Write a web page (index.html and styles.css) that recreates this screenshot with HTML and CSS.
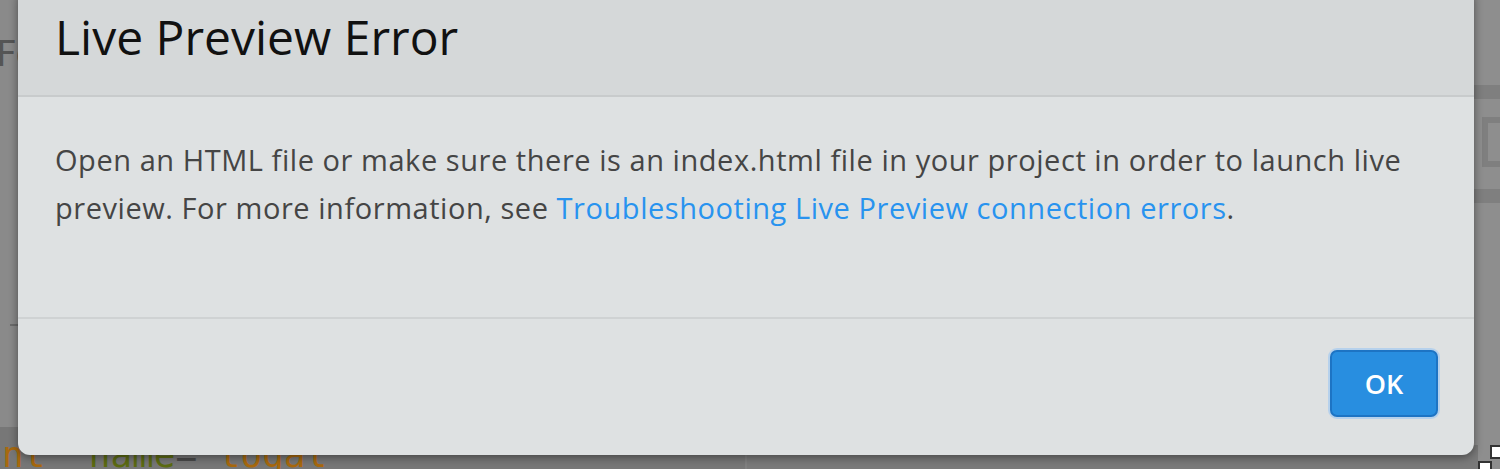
FILE: index.html
```html
<!DOCTYPE html>
<html lang="en">
<head>
<meta charset="utf-8">
<title>Live Preview Error</title>
<link rel="stylesheet" href="styles.css">
</head>
<body>
<div class="workspace">
  <div class="editor">
    <div class="code-line top-line">Fo</div>
    <div class="code-rule"></div>
    <div class="code-line last-line"><span class="attr">nt"</span> <span class="tag">name</span><span class="dash">=</span><span class="attr">"togal</span></div>
  </div>
  <div class="preview">
    <div class="side-band band-a"></div>
    <div class="side-box"></div>
    <div class="side-band band-b"></div>
    <div class="preview-foot">
      <div class="resize-grip"><span></span><span></span></div>
    </div>
  </div>
</div>

<div class="modal" role="dialog" aria-labelledby="modal-title">
  <div class="modal-header">
    <h1 id="modal-title" class="modal-title">Live Preview Error</h1>
  </div>
  <div class="modal-body">
    <p>Open an HTML file or make sure there is an index.html file in your project in order to launch live preview. For more information, see <a href="#" class="link">Troubleshooting Live Preview connection errors</a>.</p>
  </div>
  <div class="modal-footer">
    <button class="btn-primary" type="button">OK</button>
  </div>
</div>
</body>
</html>
```

FILE: styles.css
```css
html, body {
  margin: 0;
  padding: 0;
  width: 1500px;
  height: 469px;
  overflow: hidden;
}

body {
  position: relative;
  background: #8a8a8a;
  font-family: "Open Sans", Lato, sans-serif;
}

/* dimmed editor behind the dialog */
.workspace {
  display: flex;
  height: 469px;
}

.editor {
  width: 745px;
  display: flex;
  flex-direction: column;
  background: #8a8a8a;
  border-right: 2px solid #808080;
}

.code-line {
  font-family: "DejaVu Sans Mono", monospace;
  font-size: 36px;
  line-height: 36px;
  white-space: nowrap;
  color: #555;
}

.top-line {
  margin-top: 36px;
  margin-left: -4px;
  font-family: "DejaVu Sans", sans-serif;
}

.code-rule {
  margin-top: 252px;
  margin-left: 10px;
  width: 8px;
  height: 2px;
  background: #6c6c6c;
}

.last-line {
  margin-top: auto;
  margin-bottom: -4px;
  padding-top: 10px;
  padding-left: 2px;
  background: #777;
}

.attr { color: #a8690e; }
.tag { color: #5c6b12; }
.dash { color: #4a4a4a; }

.preview {
  flex: 1;
  background: #8e8e8e;
  display: flex;
  flex-direction: column;
}

.side-band {
  height: 14px;
  background: #7f7f7f;
}

.band-a { margin-top: 85px; }
.band-b { margin-top: 22px; }

.side-box {
  align-self: flex-end;
  margin-top: 18px;
  width: 18px;
  height: 50px;
  border: 6px solid #7f7f7f;
  border-right: none;
  box-sizing: border-box;
}

.preview-foot {
  margin-top: auto;
  height: 24px;
  background: #7a7a7a;
  display: flex;
  justify-content: flex-end;
}

.resize-grip {
  width: 22px;
  height: 24px;
  position: relative;
  background: #8e8e8e;
}

.resize-grip span {
  position: absolute;
  width: 10px;
  height: 10px;
  background: #fff;
  border: 2px solid #333;
}

.resize-grip span:first-child { right: -4px; top: 0; }
.resize-grip span:last-child { left: 0; bottom: -6px; }

/* dialog */
.modal {
  position: absolute;
  left: 18px;
  top: -12px;
  width: 1456px;
  height: 467px;
  display: flex;
  flex-direction: column;
  background: #dee1e2;
  border-radius: 12px;
  box-shadow: 0 2px 10px rgba(0, 0, 0, 0.45);
  overflow: hidden;
}

.modal-header {
  height: 109px;
  box-sizing: border-box;
  background: #d5d8d9;
  border-bottom: 2px solid #c8cbcc;
  padding: 0 37px 10px;
  display: flex;
  align-items: center;
}

.modal-title {
  margin: 0;
  font-weight: 400;
  font-size: 48px;
  line-height: 60px;
  color: #111;
}

.modal-body {
  height: 222px;
  box-sizing: border-box;
  border-bottom: 2px solid #cfd2d3;
  padding: 39px 37px 0;
}

.modal-body p {
  margin: 0;
  font-size: 29px;
  letter-spacing: 0.55px;
  line-height: 48px;
  color: #454545;
}

.link {
  color: #2893ef;
  text-decoration: none;
}

.modal-footer {
  flex: 1;
  display: flex;
  justify-content: flex-end;
  align-items: flex-start;
  padding: 31px 36px 0;
}

.btn-primary {
  width: 108px;
  height: 67px;
  border: 2px solid #1d74c4;
  border-radius: 7px;
  background: #288ee0;
  box-shadow: 0 0 0 2px rgba(110, 180, 255, 0.35);
  color: #fff;
  font-family: "Open Sans", Lato, sans-serif;
  font-size: 27px;
  font-weight: 600;
  padding: 0;
}
```
